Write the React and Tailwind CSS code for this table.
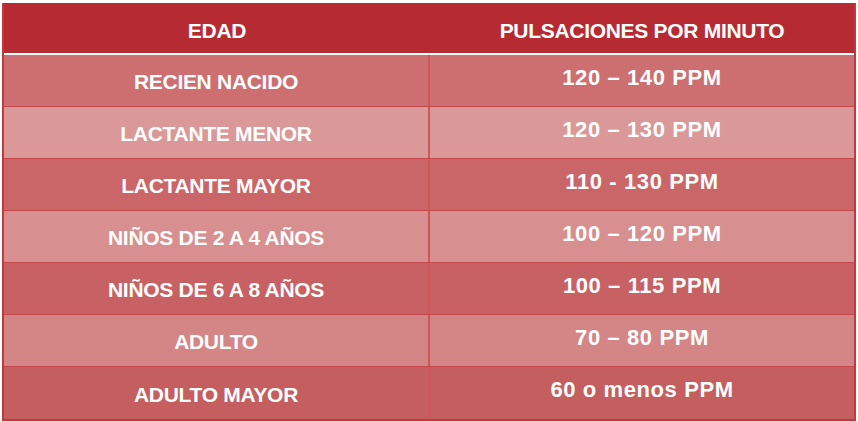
import React from "react";

const rows = [
  { edad: "RECIEN NACIDO", ppm: "120 – 140 PPM", bg: "bg-[#cd6e70]" },
  { edad: "LACTANTE MENOR", ppm: "120 – 130 PPM", bg: "bg-[#da9898]" },
  { edad: "LACTANTE MAYOR", ppm: "110 - 130 PPM", bg: "bg-[#ca6667]" },
  { edad: "NIÑOS DE 2 A 4 AÑOS", ppm: "100 – 120 PPM", bg: "bg-[#d78f8f]" },
  { edad: "NIÑOS DE 6 A 8 AÑOS", ppm: "100 – 115 PPM", bg: "bg-[#c86163]" },
  { edad: "ADULTO", ppm: "70 – 80 PPM", bg: "bg-[#d48686]" },
  { edad: "ADULTO MAYOR", ppm: "60 o menos PPM", bg: "bg-[#c55e5f]" },
];

export default function App() {
  return (
    <div
      className="w-[858px] h-[422px] bg-white flex flex-col"
      style={{ fontFamily: '"Liberation Sans", Arial, sans-serif' }}
    >
      <div className="pl-[2px] pt-[3px] w-[856px]">
        <div className="border-l-2 border-r-2 border-b-2 border-[#c2393d] bg-[#c2393d]">
          <div className="grid grid-cols-[426px_1fr] h-[50px] bg-[#b62b31] text-white font-bold text-[21px] tracking-[-0.3px]">
            <div className="flex items-center justify-center pt-[6px]">EDAD</div>
            <div className="flex items-center justify-center pt-[6px]">PULSACIONES POR MINUTO</div>
          </div>
          <div className="h-[2px] bg-white" />
          {rows.map((r, i) => (
            <div
              key={i}
              className={`grid grid-cols-[426px_1fr] h-[52px] text-white font-bold ${r.bg} ${
                i < rows.length - 1 ? "border-b border-[#c4484b]" : ""
              }`}
            >
              <div className="flex items-center justify-center pt-[3px] text-[21px] tracking-[-0.3px] border-r-2 border-[#cb5759]">
                {r.edad}
              </div>
              <div className="flex justify-center pt-[6px] text-[22px] tracking-[0.6px]">{r.ppm}</div>
            </div>
          ))}
        </div>
      </div>
      <div className="flex-1 bg-[#e1e3e1]" />
    </div>
  );
}
